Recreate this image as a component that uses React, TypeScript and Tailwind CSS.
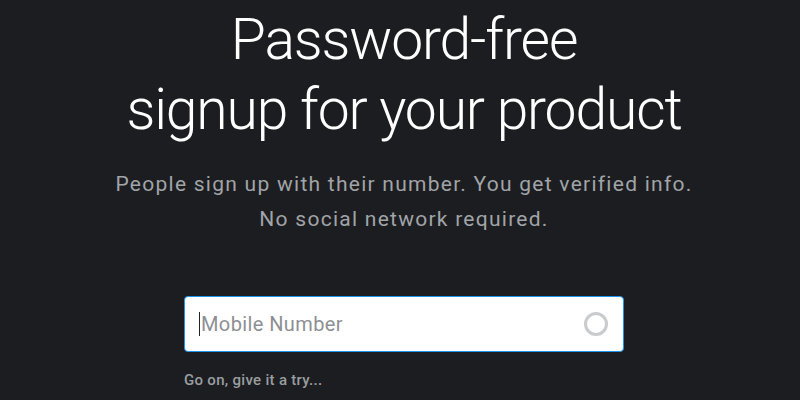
export default function App() {
  return (
    <div className="min-h-screen w-full bg-[#1c1d20] flex flex-col items-center text-center pl-[8px]" style={{ fontFamily: 'Roboto, "Liberation Sans", sans-serif' }}>
      {/* Headline */}
      <h1 className="mt-[5px] text-[57px] leading-[70px] font-light tracking-[-0.02em] text-white">
        Password-free
        <br />
        signup for your product
      </h1>

      <p className="mt-[22px] text-[21px] leading-[35px] tracking-[0.06em] text-[#a1a4a8]">
        People sign up with their number. You get verified info.
        <br />
        No social network required.
      </p>

      {/* Signup */}
      <div className="mt-[59px] w-[440px] text-left">
        <div className="h-[56px] bg-white rounded-[4px] border border-[#1e96f0] flex items-center pl-[14px] pr-[15px]">
          <span className="w-px h-[24px] bg-[#222]" />
          <input
            type="text"
            placeholder="Mobile Number"
            className="flex-1 pl-[1px] bg-transparent outline-none text-[20px] tracking-[0.02em] text-[#333] placeholder-[#8d8f93]"
          />
          <div className="w-[24px] h-[24px] rounded-full border-[3px] border-[#c9cbce]" />
        </div>
        <p className="mt-[19px] text-[15px] leading-[18px] font-medium tracking-[0.02em] text-[#9a9da1]">Go on, give it a try...</p>
      </div>
    </div>
  );
}
